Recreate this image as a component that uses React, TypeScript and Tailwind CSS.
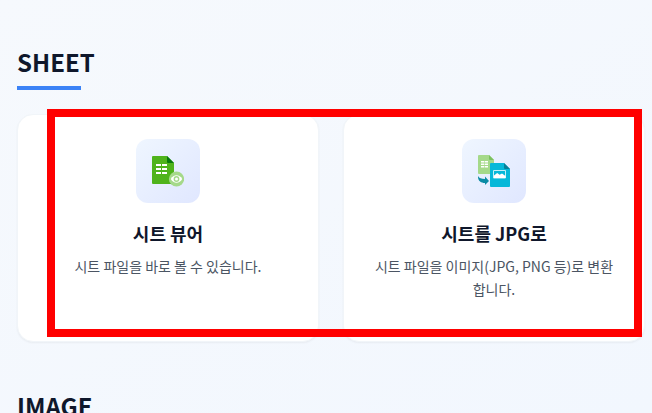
import type { ReactNode } from "react";

function SheetViewIcon() {
  return (
    <svg viewBox="0 0 32 32" className="size-8" aria-hidden="true">
      <path d="M1 1h14l7 7v21H1a1 1 0 0 1-1-1V2a1 1 0 0 1 1-1z" fill="#4fb31c" />
      <path d="M15 1l7 7h-6a1 1 0 0 1-1-1z" fill="#08780d" />
      <path d="M4 9h5v2H4zM10 9h5v2h-5zM4 13h5v2H4zM10 13h5v2h-5zM4 17h5v2H4zM10 17h5v2h-5z" fill="#fff" />
      <circle cx="24.5" cy="24" r="7.6" fill="#a5d98a" />
      <path d="M18.800 24C21.500 19 27.500 19 30.200 24C27.500 29 21.500 29 18.800 24z" fill="#fff" />
      <circle cx="24.5" cy="24" r="2.200" fill="#fff" stroke="#a5d98a" strokeWidth="1.4" />
    </svg>
  );
}

function SheetToImageIcon() {
  return (
    <svg viewBox="0 0 32 32" className="size-8" aria-hidden="true">
      <path d="M1 0h10l5 5v14H1a1 1 0 0 1-1-1V1a1 1 0 0 1 1-1z" fill="#a5d98a" />
      <path d="M11 0l5 5h-4a1 1 0 0 1-1-1z" fill="#7cc15f" />
      <path d="M3 6h3.200v1.500H3zM6.800 6H10v1.500H6.800zM3 8.500h3.200V10H3zM6.800 8.500H10V10H6.800zM3 11h3.200v1.500H3zM6.800 11H10v1.500H6.800z" fill="#fff" />
      <path d="M13 8h13l6 6v17a1 1 0 0 1-1 1H13a1 1 0 0 1-1-1V9a1 1 0 0 1 1-1z" fill="#05b8d9" />
      <path d="M26 8l6 6h-5a1 1 0 0 1-1-1z" fill="#087f98" />
      <path d="M15.500 15.500h12v7.500h-12z" fill="none" stroke="#c4eff7" strokeWidth="1" />
      <path d="M16 23v-2.500l3.200-2.500 2.400 1.800 2.400-1.300 3.500 2.500V23z" fill="#fff" />
      <path d="M0 21c1.200 2.200 3.300 3 7 3V21.500l4 4.500-4 4V28C2.500 28-.3 25.500 0 21z" fill="#0a8ba5" />
    </svg>
  );
}

function SectionTitle({ children }: { children: ReactNode }) {
  return (
    <h2 className="text-2xl leading-9 font-bold text-slate-900">
      {children}
      <span className="mt-1.5 block h-1 w-16 bg-[#3b82f6]" />
    </h2>
  );
}

function ToolCard({ icon, title, text }: { icon: ReactNode; title: string; text: string }) {
  return (
    <a
      href="#"
      className="flex flex-col items-center rounded-2xl border border-slate-100 bg-white px-6 pt-6 pb-10 text-center shadow-xs"
    >
      <span className="flex size-16 items-center justify-center rounded-xl bg-linear-to-br from-[#eff6ff] to-[#e0e7ff]">
        {icon}
      </span>
      <h3 className="mt-4 text-lg leading-7 font-bold text-slate-900">{title}</h3>
      <p className="mt-2 px-1 text-sm leading-[23px] text-[#4b5563]">{text}</p>
    </a>
  );
}

export default function App() {
  return (
    <main className="h-screen overflow-hidden bg-linear-to-br from-[#f6f9fd] to-[#f2f7fe] pt-11 pr-[7px] pl-[17px] font-['Noto_Sans_CJK_KR',sans-serif]">
      <section>
        <SectionTitle>SHEET</SectionTitle>
        <div className="relative mt-6 grid grid-cols-2 gap-6">
          <ToolCard icon={<SheetViewIcon />} title="시트 뷰어" text="시트 파일을 바로 볼 수 있습니다." />
          <ToolCard
            icon={<SheetToImageIcon />}
            title="시트를 JPG로"
            text="시트 파일을 이미지(JPG, PNG 등)로 변환합니다."
          />
          <div className="pointer-events-none absolute -top-[5px] right-[3px] bottom-[5px] left-[30px] border-8 border-[#ff0000]" />
        </div>
      </section>
      <section className="mt-[46px]">
        <SectionTitle>IMAGE</SectionTitle>
      </section>
    </main>
  );
}
